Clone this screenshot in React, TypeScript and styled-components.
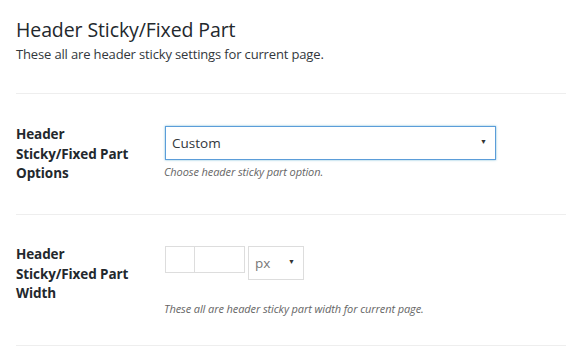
import React from 'react';
import styled, { createGlobalStyle } from 'styled-components';

const GlobalStyle = createGlobalStyle`
  body {
    margin: 0;
    background: #fff;
    font-family: "Open Sans", "Noto Sans", sans-serif;
    color: #23282d;
  }
`;

const Page = styled.div`
  padding: 17px 0 0 16px;
`;

const Title = styled.h2`
  margin: 0;
  font-size: 19.5px;
  font-weight: 400;
  line-height: 26px;
  letter-spacing: -0.1px;
`;

const Subtitle = styled.p`
  margin: 2px 0 0;
  font-size: 13px;
  line-height: 18px;
  color: #32373c;
  letter-spacing: -0.15px;
`;

const Row = styled.div<{ first?: boolean }>`
  display: flex;
  border-top: 1px solid #eeeeee;
  padding: ${p => (p.first ? '32px 0 33px' : '31px 0 29px')};
  margin-top: ${p => (p.first ? 30 : 0)}px;
`;

const Label = styled.div`
  width: 149px;
  height: 56px;
  flex: none;
  font-size: 13.5px;
  font-weight: 700;
  line-height: 19.5px;
  color: #23282d;
  letter-spacing: -0.1px;
  margin-top: -1px;
`;

const Field = styled.div`
  display: flex;
  flex-direction: column;
`;

const SelectBox = styled.div<{ width: number; focused?: boolean }>`
  box-sizing: border-box;
  width: ${p => p.width}px;
  height: 34px;
  border: 1px solid ${p => (p.focused ? '#5b9dd9' : '#dddddd')};
  box-shadow: ${p => (p.focused ? '0 0 2px rgba(30, 140, 190, 0.6)' : 'none')};
  display: flex;
  align-items: center;
  justify-content: space-between;
  padding: 0 8px 0 6px;
  font-size: 13.5px;
  color: ${p => (p.focused ? '#32373c' : '#777')};
  background: #fff;
`;

const Arrow = styled.span`
  font-size: 7px;
  color: #333;
  margin-top: -3px;
`;

const Description = styled.p<{ gap: number }>`
  margin: ${p => p.gap}px 0 0 -1px;
  font-size: 11px;
  font-style: italic;
  color: #666;
  line-height: 14px;
  letter-spacing: -0.1px;
`;

const InputGroup = styled.div`
  display: flex;
  align-items: flex-start;
  gap: 3px;
`;

const Spacing = styled.div`
  display: flex;
`;

const NumBox = styled.div<{ width: number }>`
  box-sizing: border-box;
  width: ${p => p.width}px;
  height: 27px;
  border: 1px solid #dddddd;
  & + & {
    border-left: none;
  }
`;

const Divider = styled.div`
  border-top: 1px solid #eeeeee;
`;

export default function App() {
  return (
    <Page>
      <GlobalStyle />
      <Title>Header Sticky/Fixed Part</Title>
      <Subtitle>These all are header sticky settings for current page.</Subtitle>

      <Row first>
        <Label>
          Header
          <br />
          Sticky/Fixed Part
          <br />
          Options
        </Label>
        <Field>
          <SelectBox width={331} focused>
            Custom
            <Arrow>▼</Arrow>
          </SelectBox>
          <Description gap={5}>Choose header sticky part option.</Description>
        </Field>
      </Row>

      <Row>
        <Label>
          Header
          <br />
          Sticky/Fixed Part
          <br />
          Width
        </Label>
        <Field>
          <InputGroup>
            <Spacing>
              <NumBox width={30} />
              <NumBox width={50} />
            </Spacing>
            <SelectBox width={56}>
              px
              <Arrow>▼</Arrow>
            </SelectBox>
          </InputGroup>
          <Description gap={22}>These all are header sticky part width for current page.</Description>
        </Field>
      </Row>
      <Divider />
    </Page>
  );
}
